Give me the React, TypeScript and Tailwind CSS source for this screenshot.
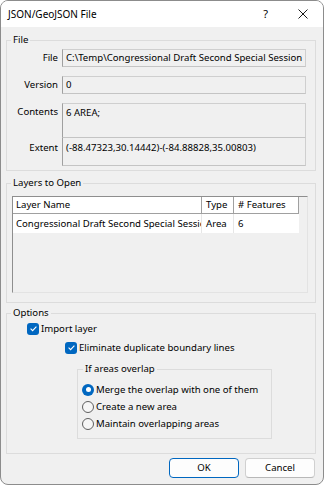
import React from "react";

function Check() {
  return (
    <span className="w-[12px] h-[12px] rounded-[3px] bg-[#0067c0] flex items-center justify-center shrink-0">
      <svg width="9" height="9" viewBox="0 0 9 9">
        <path d="M1.6 4.7 L3.6 6.6 L7.4 2.6" fill="none" stroke="white" strokeWidth="1.1" />
      </svg>
    </span>
  );
}

function Radio({ on }: { on?: boolean }) {
  return on ? (
    <span className="w-[12px] h-[12px] rounded-full bg-[#0067c0] flex items-center justify-center shrink-0">
      <span className="w-[5px] h-[5px] rounded-full bg-white" />
    </span>
  ) : (
    <span className="w-[12px] h-[12px] rounded-full border border-[#5f5f5f] bg-[#f6f6f6] shrink-0" />
  );
}

const fieldCls =
  "ml-[4px] w-[244px] border border-[#cfcfcf] border-l-[#a0a0a0] border-b-[#c4c4c4] bg-[#f0f0f0] pl-[3px]";

export default function App() {
  return (
    <div className="w-[324px] h-[485px] bg-white">
      <div className="w-[324px] h-[485px] rounded-[8px] border border-[#8c8c8c] bg-[#f0f0f0] overflow-hidden flex flex-col text-[9.6px] leading-[16px] text-black font-['Noto_Sans',sans-serif]">
        {/* Title bar */}
        <div className="h-[26px] bg-white flex items-center shrink-0">
          <span className="ml-[7px] text-[10px]">JSON/GeoJSON File</span>
          <span className="ml-auto mr-[30px] text-[11px]">?</span>
          <svg width="10" height="10" viewBox="0 0 10 10" className="mr-[15px]">
            <path d="M0.5 0.5 L9.5 9.5 M9.5 0.5 L0.5 9.5" stroke="#1a1a1a" strokeWidth="1" />
          </svg>
        </div>

        {/* File group */}
        <fieldset className="mt-[5px] ml-[5px] w-[310px] border border-[#dcdcdc] pb-[4px]">
          <legend className="ml-[4px] px-[2px] h-[16px]">File</legend>
          <div className="flex mt-[1px] h-[18px]">
            <div className="w-[51px] text-right leading-[18px]">File</div>
            <div className={fieldCls + " h-[18px] leading-[16px] whitespace-nowrap overflow-hidden"}>
              C:\Temp\Congressional Draft Second Special Session
            </div>
          </div>
          <div className="flex mt-[9px] h-[18px]">
            <div className="w-[51px] text-right leading-[18px]">Version</div>
            <div className={fieldCls + " h-[18px] leading-[16px]"}>0</div>
          </div>
          <div className="flex mt-[9px] h-[35px]">
            <div className="w-[51px] text-right pt-[1px]">Contents</div>
            <div className={fieldCls + " h-[35px] pt-[1px]"}>6 AREA;</div>
          </div>
          <div className="flex h-[28px]">
            <div className="w-[51px] text-right pt-[2px]">Extent</div>
            <div className={fieldCls + " h-[28px] border-t-0 pt-[2px]"}>
              (-88.47323,30.14442)-(-84.88828,35.00803)
            </div>
          </div>
        </fieldset>

        {/* Layers group */}
        <fieldset className="mt-[4px] ml-[5px] w-[310px] border border-[#dcdcdc] pb-[9px]">
          <legend className="ml-[4px] px-[2px] h-[16px]">Layers to Open</legend>
          <div className="mt-[5px] ml-[5px] w-[296px] h-[97px] border border-[#e3e3e3] border-t-[#8e8e8e] border-l-[#8e8e8e] bg-[#f0f0f0] flex flex-col">
            <div className="flex h-[17px] shrink-0">
              <div className="w-[189px] bg-white border-r border-b border-[#a0a0a0] pl-[3px] leading-[16px]">Layer Name</div>
              <div className="w-[32px] bg-white border-r border-b border-[#a0a0a0] pl-[4px] leading-[16px]">Type</div>
              <div className="w-[65px] bg-white border-r border-b border-[#a0a0a0] pl-[4px] leading-[16px]">
                # Features
              </div>
            </div>
            <div className="flex h-[19px] shrink-0">
              <div className="w-[189px] bg-white border-r border-[#e6e6e6] pl-[3px] leading-[19px] whitespace-nowrap overflow-hidden">
                Congressional Draft Second Special Session
              </div>
              <div className="w-[32px] bg-white border-r border-[#e6e6e6] pl-[4px] leading-[19px]">Area</div>
              <div className="w-[65px] bg-white pl-[4px] leading-[19px]">6</div>
            </div>
          </div>
        </fieldset>

        {/* Options group */}
        <fieldset className="mt-[2px] ml-[5px] w-[310px] border border-[#dcdcdc] pb-[14px]">
          <legend className="ml-[4px] px-[2px] h-[16px]">Options</legend>
          <div className="flex items-center gap-[2px] ml-[20px] mt-[1px] h-[13px]">
            <Check />
            <span>Import layer</span>
          </div>
          <div className="flex items-center gap-[2px] ml-[58px] mt-[6px] h-[13px]">
            <Check />
            <span>Eliminate duplicate boundary lines</span>
          </div>
          <fieldset className="mt-[7px] ml-[70px] w-[195px] border border-[#dcdcdc] pb-[8px]">
            <legend className="ml-[5px] px-[2px] h-[16px]">If areas overlap</legend>
            <div className="flex items-center gap-[2px] ml-[4px] mt-[6px] h-[13px]">
              <Radio on />
              <span>Merge the overlap with one of them</span>
            </div>
            <div className="flex items-center gap-[2px] ml-[4px] mt-[4px] h-[13px]">
              <Radio />
              <span>Create a new area</span>
            </div>
            <div className="flex items-center gap-[2px] ml-[4px] mt-[4px] h-[13px]">
              <Radio />
              <span>Maintain overlapping areas</span>
            </div>
          </fieldset>
        </fieldset>

        {/* Buttons */}
        <div className="flex justify-end gap-[6px] mr-[8px] mt-[4px]">
          <button className="w-[70px] h-[20px] rounded-[4px] border border-[#0067c0] bg-[#fdfdfd] leading-[18px]">
            OK
          </button>
          <button className="w-[70px] h-[20px] rounded-[4px] border border-[#d0d0d0] border-b-[#b8b8b8] bg-[#fdfdfd] leading-[18px]">
            Cancel
          </button>
        </div>
      </div>
    </div>
  );
}
